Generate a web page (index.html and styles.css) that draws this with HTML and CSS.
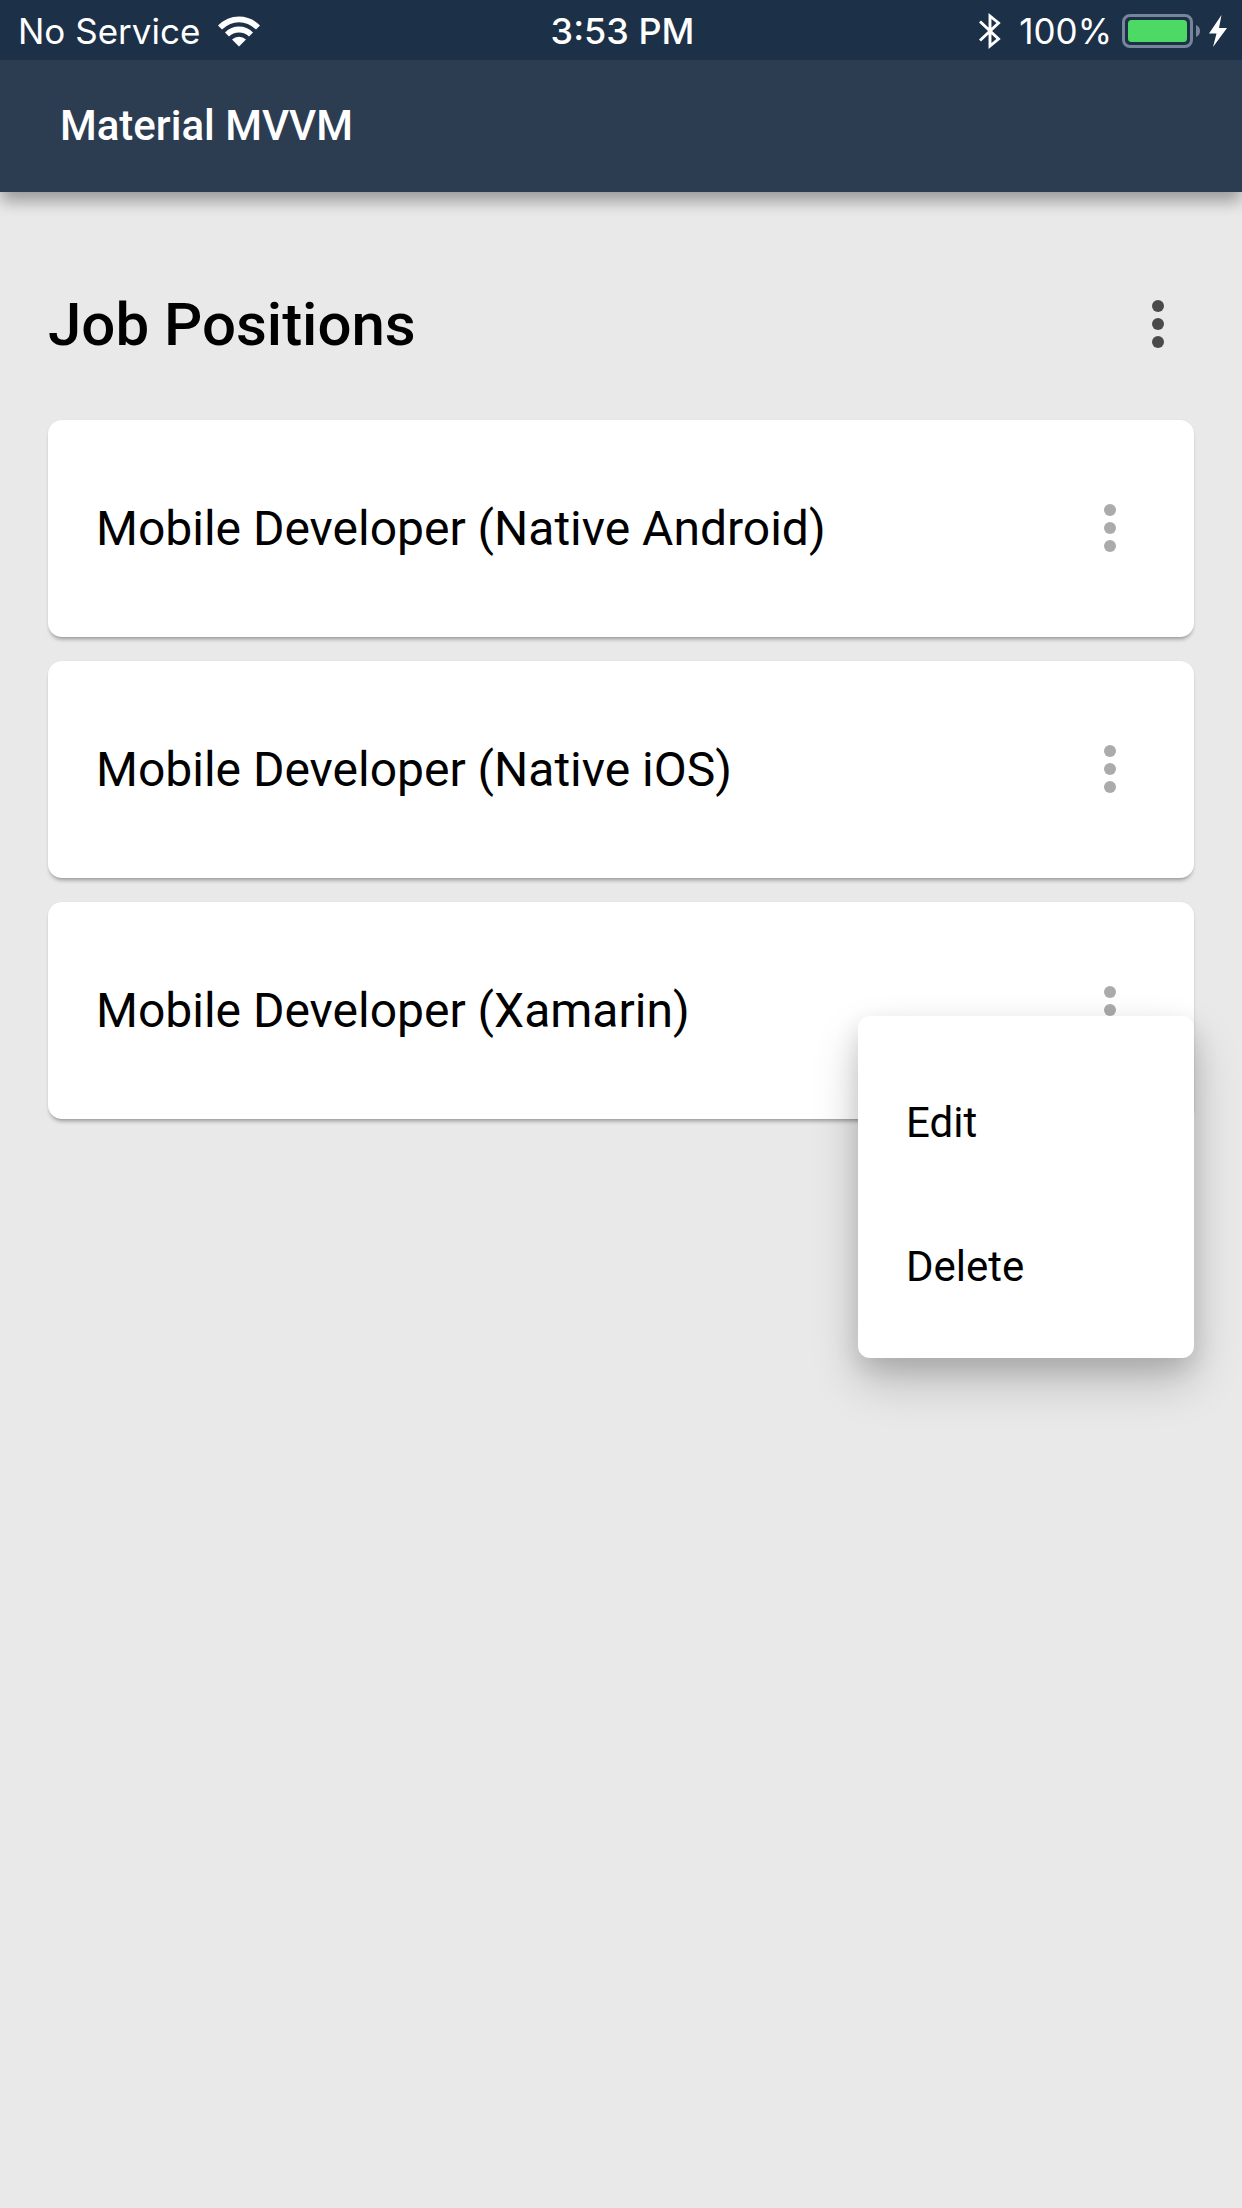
FILE: index.html
```
<!DOCTYPE html>
<html lang="en">
<head>
<meta charset="utf-8">
<meta name="viewport" content="width=device-width, initial-scale=1">
<title>Material MVVM</title>
<link rel="stylesheet" href="styles.css">
</head>
<body>
<header class="top">
  <div class="status">
    <div class="status-left">
      <span>No Service</span>
      <svg width="42" height="31" viewBox="0 0 42 31" fill="#fff" aria-hidden="true">
        <path d="M0 9.5Q9 .5 21 .5T42 9.5L38 13.5Q30 6.3 21 6.3T4 13.5Z"/>
        <path d="M7 16.5Q13 10.6 21 10.6T35 16.5L31 20.5Q27 16.5 21 16.5T11 20.5Z"/>
        <path d="M14 23.5Q17 20.7 21 20.7T28 23.5L21 30.5Z"/>
      </svg>
    </div>
    <time class="status-time">3:53 PM</time>
    <div class="status-right">
      <svg width="22" height="38" viewBox="0 0 22 38" fill="none" stroke="#fff" stroke-width="2.9" aria-hidden="true">
        <path d="M1 9.5L19.500 27L11 34V4L19.500 11L1 28.500"/>
      </svg>
      <span class="percent">100%</span>
      <svg class="battery" width="78" height="34" viewBox="0 0 78 34" aria-hidden="true">
        <rect x="1.500" y="1.500" width="68" height="31" rx="6.500" fill="none" stroke="#77859a" stroke-width="3"/>
        <rect x="6" y="6" width="59" height="22" rx="3.500" fill="#4cd964"/>
        <path d="M74 11Q78 12.500 78 17T74 23Z" fill="#77859a"/>
      </svg>
      <svg width="18" height="32" viewBox="0 0 18 32" fill="#fff" aria-hidden="true">
        <path d="M12.500 0L0 18.500H7.500L4 32L18 13H10Z"/>
      </svg>
    </div>
  </div>
  <div class="appbar">Material MVVM</div>
</header>
<main class="page">
  <div class="heading">
    <h1>Job Positions</h1>
    <button class="more" type="button" aria-label="Sort options"><svg width="12" height="48" viewBox="0 0 12 48" fill="currentColor"><circle cx="6" cy="6" r="6"/><circle cx="6" cy="24" r="6"/><circle cx="6" cy="42" r="6"/></svg></button>
  </div>
  <ul class="jobs">
    <li class="card">
      <span>Mobile Developer (Native Android)</span>
      <button class="more" type="button" aria-label="Job options"><svg width="12" height="48" viewBox="0 0 12 48" fill="currentColor"><circle cx="6" cy="6" r="6"/><circle cx="6" cy="24" r="6"/><circle cx="6" cy="42" r="6"/></svg></button>
    </li>
    <li class="card">
      <span>Mobile Developer (Native iOS)</span>
      <button class="more" type="button" aria-label="Job options"><svg width="12" height="48" viewBox="0 0 12 48" fill="currentColor"><circle cx="6" cy="6" r="6"/><circle cx="6" cy="24" r="6"/><circle cx="6" cy="42" r="6"/></svg></button>
    </li>
    <li class="card">
      <span>Mobile Developer (Xamarin)</span>
      <button class="more" type="button" aria-label="Job options" aria-expanded="true"><svg width="12" height="48" viewBox="0 0 12 48" fill="currentColor"><circle cx="6" cy="6" r="6"/><circle cx="6" cy="24" r="6"/><circle cx="6" cy="42" r="6"/></svg></button>
      <div class="menu">
        <button type="button">Edit</button>
        <button type="button">Delete</button>
      </div>
    </li>
  </ul>
</main>
</body>
</html>
```

FILE: styles.css
```
* {
  box-sizing: border-box;
}

body {
  margin: 0;
  min-height: 100vh;
  background: #e9e9e9;
  color: #000;
  font-family: Roboto, sans-serif;
}

button {
  border: 0;
  background: none;
  color: inherit;
  font: inherit;
}

.top {
  background: #2c3d52;
  color: #fff;
  box-shadow: 0 12px 14px -2px rgba(0, 0, 0, 0.22), 0 3px 20px rgba(0, 0, 0, 0.2);
}

.status {
  display: grid;
  grid-template-columns: 1fr auto 1fr;
  align-items: center;
  height: 60px;
  padding: 2px 15px 0 18px;
  background: #1c3047;
  font-family: Inter, sans-serif;
  font-size: 35px;
}

.status-left,
.status-right {
  display: flex;
  align-items: center;
}

.status-left {
  gap: 18px;
}

.status-right {
  justify-content: flex-end;
}

.status-time {
  font-size: 36px;
  font-weight: 500;
}

.percent {
  margin: 0 10px 0 18px;
}

.battery {
  margin-right: 9px;
}

.appbar {
  display: flex;
  align-items: center;
  height: 132px;
  padding: 0 60px 2px;
  font-size: 42px;
  font-weight: 500;
}

.page {
  padding: 84px 48px 48px;
}

.heading {
  display: flex;
  align-items: center;
  justify-content: space-between;
  height: 96px;
  margin-bottom: 48px;
}

h1 {
  margin: 0;
  font-size: 60px;
  font-weight: 500;
}

.more {
  display: flex;
  align-items: center;
  justify-content: center;
  width: 72px;
  height: 72px;
  padding: 0;
  color: #4a4a4a;
}

.jobs {
  display: flex;
  flex-direction: column;
  gap: 24px;
  margin: 0;
  padding: 0;
  list-style: none;
}

.card {
  position: relative;
  display: flex;
  align-items: center;
  justify-content: space-between;
  min-height: 217px;
  padding: 0 48px 1px;
  border-radius: 14px;
  background: #fff;
  box-shadow: 0 4px 4px -2px rgba(0, 0, 0, 0.36), 0 0 2px rgba(0, 0, 0, 0.06);
  font-size: 48px;
}

.card .more {
  color: #ababab;
}

.menu {
  position: absolute;
  top: 114px;
  right: 0;
  display: flex;
  flex-direction: column;
  width: 336px;
  padding: 34px 0 20px;
  border-radius: 12px;
  background: #fff;
  box-shadow: 0 24px 48px rgba(0, 0, 0, 0.2), 0 10px 24px rgba(0, 0, 0, 0.12);
}

.menu button {
  height: 144px;
  padding: 0 48px;
  font-size: 42px;
  text-align: left;
}
```
